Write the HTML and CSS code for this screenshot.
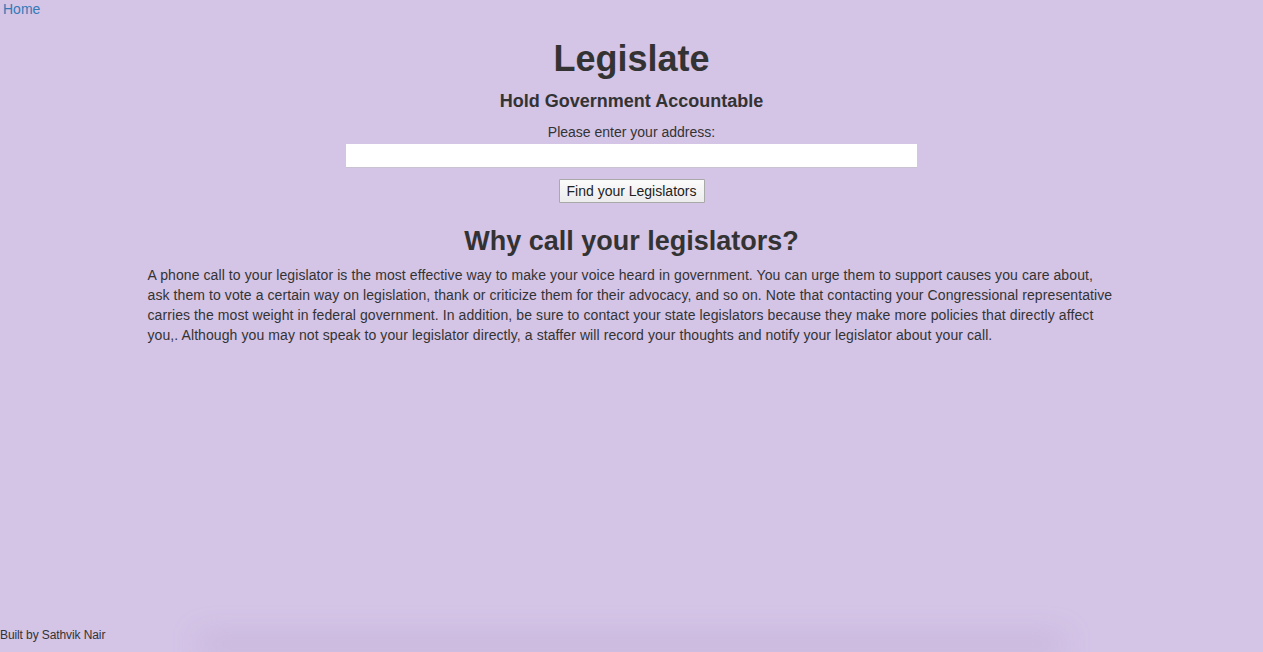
FILE: index.html
```html
<!DOCTYPE html>
<html lang="en">
<head>
<meta charset="utf-8">
<title>Legislate</title>
<link rel="stylesheet" href="styles.css">
</head>
<body>
<a class="home" href="#">Home</a>
<main class="container">
  <h1 class="title">Legislate</h1>
  <h4 class="subtitle">Hold Government Accountable</h4>
  <form class="search">
    <label class="search-label" for="addr">Please enter your address:</label>
    <input class="search-input" id="addr" type="text">
    <button class="search-btn" type="button">Find your Legislators</button>
  </form>
  <h2 class="why">Why call your legislators?</h2>
  <p class="body-text">A phone call to your legislator is the most effective way to make your voice heard in government. You can urge them to support causes you care about, ask them to vote a certain way on legislation, thank or criticize them for their advocacy, and so on. Note that contacting your Congressional representative carries the most weight in federal government. In addition, be sure to contact your state legislators because they make more policies that directly affect you,. Although you may not speak to your legislator directly, a staffer will record your thoughts and notify your legislator about your call.</p>
</main>
<footer class="footer">Built by Sathvik Nair</footer>
<div class="shade"></div>
</body>
</html>
```

FILE: styles.css
```css
html, body {
  margin: 0;
  padding: 0;
  height: 100%;
}
body {
  background: #d4c4e6;
  color: #333;
  font-family: "Liberation Sans", Arial, sans-serif;
  font-size: 14px;
  line-height: 20px;
  position: relative;
  overflow: hidden;
}
.home {
  display: block;
  padding-left: 3px;
  color: #337ab7;
  text-decoration: none;
  line-height: 18px;
}
.container {
  width: 970px;
  margin: 0 auto;
  text-align: center;
}
.title {
  font-size: 36px;
  font-weight: bold;
  line-height: 40px;
  margin: 21px 0 10px;
}
.subtitle {
  font-size: 18px;
  font-weight: bold;
  line-height: 20px;
  margin: 12px 0 0;
}
.search {
  display: flex;
  flex-direction: column;
  align-items: center;
  margin-top: 11px;
}
.search-label {
  display: block;
  line-height: 20px;
  margin-bottom: 2px;
}
.search-input {
  box-sizing: border-box;
  width: 571px;
  height: 24px;
  margin: 0;
  border: none;
  border-bottom: 1px solid #c9c2d0;
  background: #fff;
  font-family: inherit;
  font-size: 14px;
  padding: 0 4px;
}
.search-btn {
  box-sizing: border-box;
  margin-top: 11px;
  width: 146px;
  height: 24px;
  padding: 0;
  border: 1px solid #a9a9a9;
  border-radius: 1px;
  background: linear-gradient(#fbfbfb, #ececec);
  color: #222;
  font-family: inherit;
  font-size: 14px;
}
.why {
  font-size: 27px;
  font-weight: bold;
  line-height: 30px;
  margin: 23px 0 9px;
}
.body-text {
  text-align: left;
  margin: 0 0 0 1px;
  line-height: 20px;
  letter-spacing: 0.09px;
}
.footer {
  position: absolute;
  left: 0;
  top: 627px;
  font-size: 12px;
  line-height: 16px;
  letter-spacing: -0.1px;
  color: #333;
}
.shade {
  position: absolute;
  left: 200px;
  right: 200px;
  bottom: 0;
  height: 16px;
  background: rgba(170, 145, 195, 0.35);
  filter: blur(14px);
}
```
